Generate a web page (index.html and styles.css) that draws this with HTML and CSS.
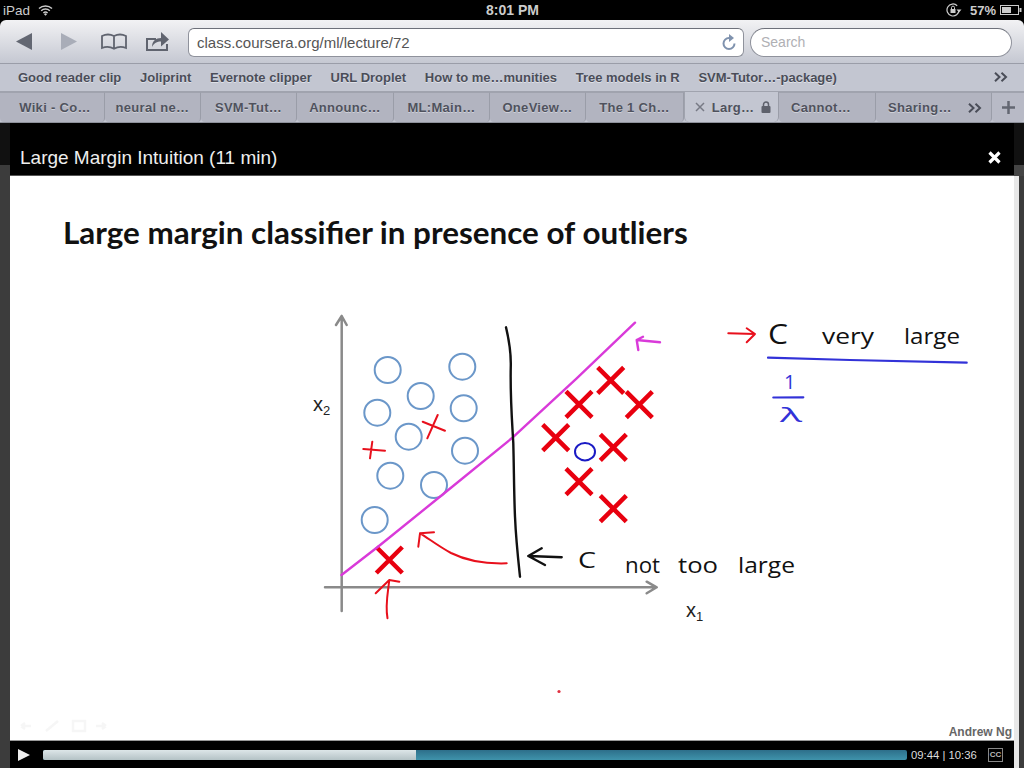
FILE: index.html
```html
<!DOCTYPE html>
<html lang="en">
<head>
    <meta charset="UTF-8">
    <title>Large Margin Intuition (11 min)</title>
    <link rel="stylesheet" href="styles.css">
</head>
<body>
    <div class="statusbar">
        <div class="status-left">
            <span>iPad</span>
            <svg class="wifi" width="15" height="12" viewBox="0 0 15 12">
                <path d="M1 4.500a9.500 9.500 0 0 1 13 0M3.200 6.800a6.300 6.300 0 0 1 8.600 0M5.400 9a3.200 3.200 0 0 1 4.200 0" fill="none" stroke="#ccc" stroke-width="1.500"/>
                <path d="M7.500 11.800 6 10.200a2 2 0 0 1 3 0z" fill="#ccc"/>
            </svg>
        </div>
        <div class="status-time">8:01 PM</div>
        <div class="status-right">
            <svg width="16" height="14" viewBox="0 0 16 14">
                <path d="M13 7a6 6 0 1 1-1.800-4.300" fill="none" stroke="#ccc" stroke-width="1.200"/>
                <path d="M13 9.500 15.500 6.500h-5z" fill="#ccc"/>
                <rect x="4.500" y="6" width="5" height="4" fill="#ccc"/>
                <path d="M5.500 6V4.600a1.500 1.500 0 0 1 3 0V6" fill="none" stroke="#ccc"/>
            </svg>
            <span>57%</span>
            <svg width="22" height="10" viewBox="0 0 22 10">
                <rect x="0.500" y="0.500" width="18" height="9" fill="none" stroke="#ccc"/>
                <rect x="2" y="2" width="9" height="6" fill="#ccc"/>
                <rect x="19.500" y="3" width="2" height="4" fill="#ccc"/>
            </svg>
        </div>
    </div>

    <div class="toolbar">
        <div class="nav-icons">
            <svg width="160" height="24" viewBox="0 0 160 24">
                <path d="M1 11.500 17 3v17z" fill="#636772"/>
                <path d="M46 3v17l16-8.500z" fill="#a9adb8"/>
                <path d="M87 18V6c4-2 8-2 12 0 4-2 8-2 12 0v12c-4-1.500-8-1.500-12 .8-4-2.300-8-2.300-12-.8zM99 6v12.800" fill="none" stroke="#60646f" stroke-width="1.800"/>
                <path d="M141 9h-9v11h20v-6" fill="none" stroke="#60646f" stroke-width="2"/>
                <path d="M137 17c0-6 4-9 9-9V2l8 7.500-8 7v-5c-4 0-7 1.500-9 5.500z" fill="#60646f"/>
            </svg>
        </div>
        <div class="address">
            <span>class.coursera.org/ml/lecture/72</span>
            <svg width="16" height="18" viewBox="0 0 16 18">
                <path d="M13.500 10.500a5.500 5.500 0 1 1-5.500-5.500" fill="none" stroke="#7f92ae" stroke-width="2"/>
                <path d="M8 1v8l5-4z" fill="#7f92ae"/>
            </svg>
        </div>
        <div class="search">Search</div>
    </div>

    <div class="bookmarks">
        <span>Good reader clip</span>
        <span>Joliprint</span>
        <span>Evernote clipper</span>
        <span>URL Droplet</span>
        <span>How to me…munities</span>
        <span>Tree models in R</span>
        <span>SVM-Tutor…-package)</span>
        <span class="more">
            <svg width="14" height="10" viewBox="0 0 14 10"><path d="M1 .8 5.500 5 1 9.200M7.500 .8 12 5 7.500 9.200" fill="none" stroke="#4a4d58" stroke-width="2"/></svg>
        </span>
    </div>

    <div class="tabs">
        <div class="tab tab-first w105">Wiki - Co…</div>
        <div class="tab w96">neural ne…</div>
        <div class="tab w96">SVM-Tut…</div>
        <div class="tab w97">Announc…</div>
        <div class="tab w96">ML:Main…</div>
        <div class="tab w96">OneView…</div>
        <div class="tab w98">The 1 Ch…</div>
        <div class="tab tab-active w95">
            <svg width="10" height="10" viewBox="0 0 10 10"><path d="M1 1l8 8M9 1l-8 8" stroke="#777a85" stroke-width="1.500"/></svg>
            <span>Larg…</span>
            <svg width="10" height="12" viewBox="0 0 10 12"><rect x="0.500" y="5" width="9" height="7" rx="1" fill="#5e616c"/><path d="M2.500 5V3.500a2.500 2.500 0 0 1 5 0V5" fill="none" stroke="#5e616c" stroke-width="1.500"/></svg>
        </div>
        <div class="tab tab-cannot w97">Cannot…</div>
        <div class="tab tab-last">
            <span>Sharing…</span>
            <svg width="14" height="10" viewBox="0 0 14 10"><path d="M1 .8 5.500 5 1 9.200M7.500 .8 12 5 7.500 9.200" fill="none" stroke="#4a4d58" stroke-width="2"/></svg>
        </div>
        <div class="tab tab-new">
            <svg width="13" height="13" viewBox="0 0 13 13"><path d="M6.500 0v13M0 6.500h13" stroke="#636772" stroke-width="2.500"/></svg>
        </div>
    </div>

    <div class="page">
        <div class="side side-left"></div>

        <div class="modal">
            <div class="modal-header">
                <span>Large Margin Intuition (11 min)</span>
                <svg width="13" height="13" viewBox="0 0 13 13"><path d="M1.500 1.500l10 10M11.500 1.500l-10 10" stroke="#fff" stroke-width="3.200"/></svg>
            </div>

            <div class="slide">
                <h1>Large margin classifier in presence of outliers</h1>

                <svg class="plot" width="1004" height="410" viewBox="10 290 1004 410">
                    <g class="axis">
                        <path d="M341.700 611V316M336 325l5.700-9 5 9"/>
                        <path d="M325 587.300H656M646.700 581.700l10 5.600-10 6"/>
                    </g>
                    <g class="circles">
                        <circle cx="387.700" cy="370" r="13"/>
                        <circle cx="462.300" cy="366.700" r="13"/>
                        <circle cx="420.700" cy="396" r="13"/>
                        <circle cx="377.300" cy="412.700" r="13"/>
                        <circle cx="463.700" cy="408.300" r="13"/>
                        <circle cx="408.700" cy="436.700" r="13"/>
                        <circle cx="465" cy="450.700" r="13"/>
                        <circle cx="390.300" cy="475.700" r="13"/>
                        <circle cx="434" cy="485" r="13"/>
                        <circle cx="374.700" cy="520" r="13"/>
                    </g>
                    <g class="crosses">
                        <path d="M597.700 367.300l26 26M623.700 367.300l-26 26"/>
                        <path d="M566 391.300l26 26M592 391.300l-26 26"/>
                        <path d="M626.300 391.700l26 26M652.300 391.700l-26 26"/>
                        <path d="M542.700 424.700l26 26M568.700 424.700l-26 26"/>
                        <path d="M600.300 434.300l26 26M626.300 434.300l-26 26"/>
                        <path d="M566 468.700l26 26M592 468.700l-26 26"/>
                        <path d="M600.300 495.700l26 26M626.300 495.700l-26 26"/>
                        <path d="M376.300 547l26 26M402.300 547l-26 26"/>
                    </g>
                    <g class="thin-red">
                        <path d="M363.300 449l21.700 1.700M372.300 441.700 370 458.300"/>
                        <path d="M422.700 421.700 445 430.700M437.700 415 427.300 438.300"/>
                        <path d="M506.700 563.300C485 564 465 560 451 553 438 546 428 538 420 533.300M434 532.300 420 533.300 418.300 546.700"/>
                        <path d="M387.500 618.300C385 605 388 592 389.300 580M375.700 593.300 389.300 580 399.300 581.700"/>
                        <path d="M728.300 333.300 755 334M746.700 328.300 755 334 746.700 342.300"/>
                    </g>
                    <ellipse class="blob" cx="585" cy="451.700" rx="10" ry="8.700"/>
                    <path class="margin" d="M341.500 575 378.300 546.500 443.300 494 511.700 438.300 576.700 378.300 635 322.700"/>
                    <path class="margin" d="M660 342.300 636.700 340M643 336.700 636.700 340 638.300 350"/>
                    <g class="ink">
                        <path d="M506 327.300C509 340 511 350 510.800 365 510 395 512 420 513.300 443.300 514 470 514 495 515 516.700 516 540 518 558 520 576.700"/>
                        <path d="M561.700 557.300 528.300 556M541.700 548.300 528.300 556 545 565"/>
                    </g>
                    <g class="blue">
                        <path d="M768 357.700 850 360 966.700 362.700"/>
                        <path d="M773.300 397.500 803.300 397.300"/>
                    </g>
                    <circle cx="559" cy="691.500" r="1.600" fill="#e03040"/>

                    <text class="label" x="313" y="411">x<tspan class="sub" dy="4">2</tspan></text>
                    <text class="label" x="686" y="617">x<tspan class="sub" dy="4">1</tspan></text>
                    <text class="hand" x="578" y="568" textLength="18" lengthAdjust="spacingAndGlyphs">C</text>
                    <text class="hand" x="625" y="573" textLength="35" lengthAdjust="spacingAndGlyphs">not</text>
                    <text class="hand" x="678" y="573" textLength="40" lengthAdjust="spacingAndGlyphs">too</text>
                    <text class="hand" x="738" y="573" textLength="57" lengthAdjust="spacingAndGlyphs">large</text>
                    <text class="hand hand-big" x="768" y="344" textLength="20" lengthAdjust="spacingAndGlyphs">C</text>
                    <text class="hand" x="822" y="344" textLength="52" lengthAdjust="spacingAndGlyphs">very</text>
                    <text class="hand" x="904" y="344" textLength="56" lengthAdjust="spacingAndGlyphs">large</text>
                    <text class="hand hand-blue" x="784" y="389">1</text>
                    <text class="hand hand-blue" x="780" y="422" textLength="22" lengthAdjust="spacingAndGlyphs">λ</text>
                </svg>

                <div class="slide-footer">
                    <svg width="90" height="14" viewBox="0 0 90 14">
                        <path d="M3 7h10M3 7l4-3M3 7l4 3M28 12 40 2M55 2h12v10H55zM78 7h10M88 7l-4-3M88 7l-4 3" fill="none" stroke="#f6f6f6" stroke-width="2.500"/>
                    </svg>
                    <span>Andrew Ng</span>
                </div>
            </div>

            <div class="controls">
                <svg width="12" height="12" viewBox="0 0 12 12"><path d="M0 0v12l12-6z" fill="#eee"/></svg>
                <div class="progress">
                    <div class="progress-played" style="width: 373px"></div>
                </div>
                <span class="time">09:44 | 10:36</span>
                <div class="cc">CC</div>
            </div>
        </div>

        <div class="side side-right">
            <div class="side-top"></div>
            <div class="side-thumb"></div>
            <div class="side-bottom"></div>
        </div>
    </div>
</body>
</html>
```

FILE: styles.css
```css
html, body {
    margin: 0;
    padding: 0;
}
body {
    width: 1024px;
    height: 768px;
    overflow: hidden;
    background-color: #000;
    font-family: "Liberation Sans", Arial, sans-serif;
    display: flex;
    flex-direction: column;
}

/* ipad status bar */
.statusbar {
    height: 20px;
    flex: none;
    display: grid;
    grid-template-columns: 1fr auto 1fr;
    align-items: center;
    padding: 0 2px 0 3px;
    color: #ccc;
    font-size: 13.500px;
}
.status-left {
    display: flex;
    align-items: center;
    gap: 8px;
}
.status-time {
    font-weight: bold;
    font-size: 14px;
}
.status-right {
    display: flex;
    align-items: center;
    justify-content: flex-end;
    gap: 7px;
}
.status-right span {
    margin-left: 1px;
    font-size: 13px;
    font-weight: bold;
    margin-right: -3px;
}

/* browser chrome */
.toolbar {
    height: 44px;
    flex: none;
    box-sizing: border-box;
    display: flex;
    align-items: center;
    padding: 1px 12px 0 15px;
    background: linear-gradient(#f2f2f4, #c5c8d2);
    border-radius: 6px 6px 0 0;
    border-bottom: 1px solid #9a9da8;
}
.nav-icons {
    width: 173px;
    height: 24px;
    flex: none;
}
.address {
    width: 556px;
    height: 29px;
    box-sizing: border-box;
    flex: none;
    display: flex;
    align-items: center;
    justify-content: space-between;
    padding: 0 6px 0 8px;
    background-color: #fff;
    border: 1px solid #8f929c;
    border-top-color: #6d707a;
    border-radius: 6px;
    color: #555;
    font-size: 15px;
}
.search {
    width: 262px;
    height: 29px;
    box-sizing: border-box;
    flex: none;
    margin-left: 6px;
    padding-left: 10px;
    line-height: 27px;
    background-color: #fff;
    border: 1px solid #8f929c;
    border-top-color: #6d707a;
    border-radius: 15px;
    color: #b0b0b4;
    font-size: 14px;
}
.bookmarks {
    height: 28px;
    flex: none;
    box-sizing: border-box;
    display: flex;
    align-items: center;
    gap: 18.700px;
    padding: 0 16px 1px 18px;
    background-color: #c3c6d1;
    border-bottom: 1px solid #a0a3ae;
    color: #4a4d58;
    font-size: 13px;
    font-weight: bold;
    text-shadow: 0 1px 0 #dfe1e8;
}
.more {
    margin-left: auto;
    display: flex;
}
.tabs {
    height: 31px;
    flex: none;
    box-sizing: border-box;
    display: flex;
    background-color: #c3c6d1;
    border-bottom: 1px solid #8e919b;
    color: #4f525d;
    font-size: 13px;
    font-weight: bold;
    text-shadow: 0 1px 0 #cfd1d9;
}
.tab {
    height: 30px;
    box-sizing: border-box;
    flex: none;
    display: flex;
    align-items: center;
    justify-content: center;
    gap: 7px;
    background-color: #b2b4c0;
    border-right: 1px solid #9a9da8;
    border-top: 1px solid #a0a3ae;
    border-radius: 0 0 4px 4px;
    letter-spacing: 0.300px;
}
.tab-first {
    padding-left: 6px;
}
.tab-cannot {
    padding-right: 12px;
}
.w105 { width: 105px; }
.w98 { width: 98px; }
.w97 { width: 97px; }
.w96 { width: 96px; }
.w95 { width: 95px; }
.tab-active {
    padding-left: 3px;
    background-color: #c3c6d1;
    border-top: none;
    border-left: 1px solid #a0a3ae;
    border-radius: 0 0 5px 5px;
}
.tab-last {
    width: 116px;
    justify-content: flex-start;
    gap: 16px;
    padding-left: 12px;
}
.tab-new {
    flex: 1;
    background-color: #b8bac6;
    border-right: none;
}

/* coursera lecture page under the chrome */
.page {
    flex: 1;
    display: flex;
    min-height: 0;
}
.side {
    width: 10px;
    flex: none;
}
.side-left {
    background: linear-gradient(#111 42px, #3c3c3c 42px);
}
.side-right {
    display: flex;
    flex-direction: column;
}
.side-top {
    height: 42px;
    background-color: #111;
}
.side-thumb {
    height: 11px;
    background-color: #454545;
}
.side-bottom {
    flex: 1;
    background: linear-gradient(90deg, #e8e8e8 5px, #3c3c3c 5px);
}
.modal {
    flex: 1;
    display: flex;
    flex-direction: column;
    min-width: 0;
}
.modal-header {
    height: 53px;
    flex: none;
    box-sizing: border-box;
    display: flex;
    align-items: flex-end;
    justify-content: space-between;
    padding: 0 13px 6px 10px;
    background-color: #000;
    border-bottom: 1px solid #555;
    color: #eee;
    font-size: 19px;
}
.modal-header svg {
    margin-bottom: 5px;
}
.slide {
    flex: 1;
    display: flex;
    flex-direction: column;
    background-color: #fff;
    min-height: 0;
}
.slide h1 {
    height: 114px;
    flex: none;
    box-sizing: border-box;
    margin: 0;
    padding: 36px 0 0 53px;
    font-family: Lato, "Liberation Sans", sans-serif;
    font-size: 31.400px;
    font-weight: bold;
    line-height: 40px;
    white-space: nowrap;
    color: #111;
}
.plot {
    flex: none;
    display: block;
}
.slide-footer {
    flex: 1;
    display: flex;
    align-items: flex-end;
    justify-content: space-between;
    padding: 0 2px 1px 8px;
    color: #666;
    font-size: 12px;
    font-weight: bold;
}
.slide-footer svg {
    margin-bottom: 6px;
}

/* drawing on the slide */
.plot path,
.plot circle,
.plot ellipse {
    fill: none;
    stroke-linecap: round;
    stroke-linejoin: round;
}
.plot > circle {
    fill: #e03040;
    stroke: none;
}
.axis path {
    stroke: #8a8a8a;
    stroke-width: 2.500;
}
.circles circle {
    stroke: #6b97c9;
    stroke-width: 2;
}
.crosses path {
    stroke: #e8000f;
    stroke-width: 4.500;
    stroke-linecap: butt;
}
.thin-red path {
    stroke: #e8101c;
    stroke-width: 2;
}
.blob {
    stroke: #1a1ac4;
    stroke-width: 2;
}
.plot .margin {
    stroke: #d93ad9;
    stroke-width: 2.400;
}
.ink path {
    stroke: #111;
    stroke-width: 2.400;
}
.blue path {
    stroke: #3232d8;
    stroke-width: 2.200;
}
.label {
    font-family: "Liberation Sans", sans-serif;
    font-size: 20px;
    fill: #222;
}
.sub {
    font-size: 13px;
}
.hand {
    font-family: "Open Sans", sans-serif;
    font-size: 22px;
    font-weight: 400;
    fill: #111;
}
.hand-big {
    font-size: 28px;
}
.hand-blue {
    fill: #3232d8;
    font-size: 20px;
}

/* video controls */
.controls {
    height: 28px;
    flex: none;
    box-sizing: border-box;
    display: flex;
    align-items: center;
    padding: 0 11px 0 8px;
    background-color: #000;
    border-top: 1px solid #999;
    color: #ddd;
    font-size: 11.300px;
}
.progress {
    width: 864px;
    height: 10px;
    flex: none;
    margin-left: 13px;
    background: linear-gradient(#2d6f8a, #3f93ab);
    border-radius: 2px;
}
.progress-played {
    height: 100%;
    background: linear-gradient(#dde6e8, #b4c2c5);
    border-radius: 2px 0 0 2px;
}
.time {
    margin-left: 4px;
    white-space: nowrap;
}
.cc {
    width: 15px;
    height: 14px;
    box-sizing: border-box;
    margin-left: auto;
    border: 1px solid #888;
    color: #bbb;
    font-size: 8px;
    font-weight: bold;
    line-height: 12px;
    text-align: center;
}
```
